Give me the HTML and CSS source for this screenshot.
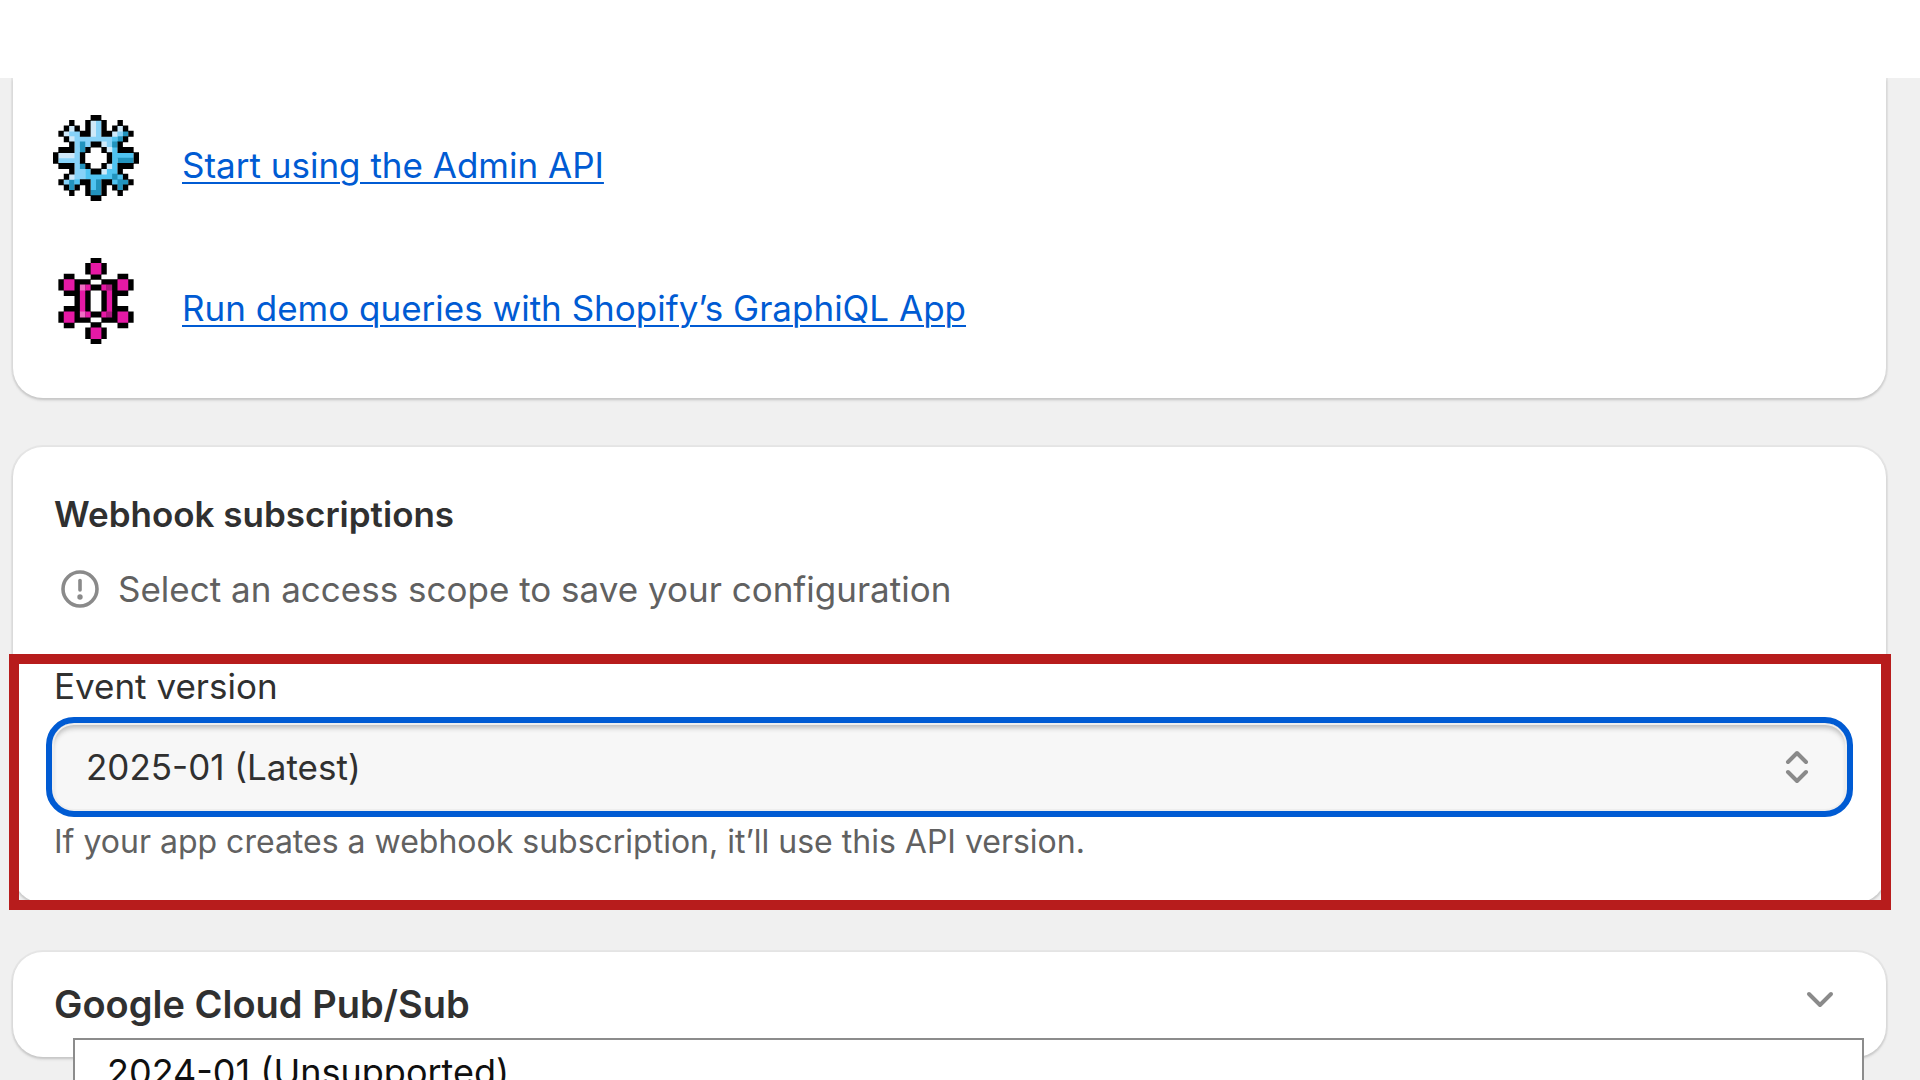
FILE: index.html
```html
<!DOCTYPE html>
<html lang="en">
<head>
<meta charset="utf-8">
<title>App configuration</title>
<meta name="viewport" content="width=device-width, initial-scale=1">
<link rel="stylesheet" href="styles.css">
</head>
<body>
<div class="page">
  <header class="topbar"></header>
  <main class="content">
    <section class="card card-links">
      <div class="resource">
        <svg class="resource-icon" viewBox="0 0 16 16" aria-hidden="true">
          <path class="px-sky" d="M7 1.5h2M7 2.5h2M3 2.5h1M12 2.5h1M2 3.5h3M7 3.5h2M11 3.5h2M3 4.5h9M4 5.5h3M9 5.5h2M4 6.5h1M10 6.5h1M1 7.5h4M1 8.5h4M4 9.5h1M10 9.5h1M4 10.5h2M9 10.5h1M3 11.5h3M2 12.5h2"/>
          <path class="px-blue" d="M11 3.5h1M11 4.5h1M11 5.5h1M11 6.5h1M11 7.5h4M11 8.5h1M10 9.5h2M5 9.5h1M6 10.5h1M10 10.5h2M6 11.5h7M4 12.5h1M7 12.5h1M11 12.5h2M7 13.5h1M7 14.5h1"/>
          <path class="px-deep" d="M13 3.5h1M12 4.5h1M5 5.5h1M11 5.5h1M5 6.5h1M12 8.5h3M5 9.5h1M11 11.5h1M3 12.5h1M8 12.5h1M12 12.5h2M3 13.5h1M8 13.5h1M12 13.5h1M7 14.5h2"/>
          <path class="px-pale" d="M7 1.5h1M7 2.5h1M7 3.5h1M3 2.5h1M2 3.5h1M3 4.5h1M12 2.5h1M11 3.5h1M9 5.5h1M10 6.5h1M1 7.5h3M10 9.5h1M9 10.5h1M3 11.5h1"/>
          <path class="px-black" d="M7 .5h2M3 1.5h1M6 1.5h1M9 1.5h1M12 1.5h1M2 2.5h1M4 2.5h1M6 2.5h1M9 2.5h1M11 2.5h1M13 2.5h1M1 3.5h1M5 3.5h2M9 3.5h2M14 3.5h1M2 4.5h1M13 4.5h1M3 5.5h1M7 5.5h2M12 5.5h1M1 6.5h3M6 6.5h1M9 6.5h1M12 6.5h3M0 7.5h1M5 7.5h1M10 7.5h1M15 7.5h1M0 8.5h1M5 8.5h1M10 8.5h1M15 8.5h1M1 9.5h3M6 9.5h1M9 9.5h1M12 9.5h3M3 10.5h1M7 10.5h2M12 10.5h1M2 11.5h1M13 11.5h1M1 12.5h1M5 12.5h2M9 12.5h2M14 12.5h1M2 13.5h1M4 13.5h1M6 13.5h1M9 13.5h1M11 13.5h1M13 13.5h1M3 14.5h1M6 14.5h1M9 14.5h1M12 14.5h1M7 15.5h2"/>
        </svg>
        <a class="resource-link" href="#admin-api">Start using the Admin API</a>
      </div>
      <div class="resource">
        <svg class="resource-icon" viewBox="0 0 16 16" aria-hidden="true">
          <path class="px-black" d="M7 .5h2M6 1.5h4M6 2.5h4M2 3.5h2M7 3.5h2M12 3.5h2M1 4.5h6M9 4.5h6M1 5.5h14M2 6.5h5M9 6.5h5M4 7.5h3M9 7.5h3M4 8.5h3M9 8.5h3M2 9.5h5M9 9.5h5M1 10.5h14M1 11.5h6M9 11.5h6M2 12.5h2M7 12.5h2M12 12.5h2M6 13.5h4M6 14.5h4M7 15.5h2"/>
          <path class="px-pink" d="M7 1.5h2M7 2.5h2M2 4.5h2M12 4.5h2M2 5.5h2M6 5.5h1M9 5.5h1M12 5.5h2M5 6.5h1M10 6.5h1M5 7.5h1M10 7.5h1M5 8.5h1M10 8.5h1M5 9.5h1M10 9.5h1M2 10.5h2M6 10.5h1M9 10.5h1M12 10.5h2M2 11.5h2M12 11.5h2M7 13.5h2M7 14.5h2"/>
          <path class="px-rose" d="M5 5.5h1M5 10.5h1"/>
          <path class="px-plum" d="M10 5.5h1M10 10.5h1"/>
        </svg>
        <a class="resource-link" href="#graphiql">Run demo queries with Shopify’s GraphiQL App</a>
      </div>
    </section>

    <section class="card card-webhooks">
      <h2 class="card-title">Webhook subscriptions</h2>
      <p class="notice">
        <svg class="notice-icon" viewBox="0 0 40 40" aria-hidden="true">
          <circle cx="20" cy="20" r="17" fill="none" stroke="currentColor" stroke-width="3.6"/>
          <path d="M20 11.500v9.500" fill="none" stroke="currentColor" stroke-width="3.600" stroke-linecap="round"/>
          <circle cx="20" cy="28" r="2.700" fill="currentColor"/>
        </svg>
        Select an access scope to save your configuration
      </p>
      <div class="field">
        <label class="field-label" for="event-version">Event version</label>
        <div class="select-box">
          <select class="select" id="event-version" aria-describedby="version-help">
            <option>2025-01 (Latest)</option>
          </select>
          <svg class="select-caret" viewBox="0 0 24 36" aria-hidden="true">
            <path d="M3 13l9-9 9 9M3 23l9 9 9-9"/>
          </svg>
          <ul class="menu" role="listbox" aria-label="Event version">
            <li class="menu-item" role="option">2024-01 (Unsupported)</li>
          </ul>
        </div>
        <p class="field-help" id="version-help">If your app creates a webhook subscription, it’ll use this API version.</p>
        <div class="highlight"></div>
      </div>
    </section>

    <section class="card">
      <button class="disclosure" type="button" aria-expanded="false">
        Google Cloud Pub/Sub
        <svg class="disclosure-icon" viewBox="0 0 30 20" aria-hidden="true">
          <path d="M4 4l11 11L26 4"/>
        </svg>
      </button>
    </section>
  </main>
</div>
</body>
</html>
```
FILE: styles.css
```css
* {
  box-sizing: border-box;
}

body {
  margin: 0;
  background: #f0f0f0;
  color: #303030;
  font-family: Inter, "Liberation Sans", sans-serif;
  font-size: 35px;
  line-height: 48px;
}

h2,
p,
ul {
  margin: 0;
  padding: 0;
}

.page {
  height: 100vh;
  overflow: hidden;
}

.topbar {
  position: relative;
  z-index: 1;
  height: 78px;
  background: #fff;
}

.content {
  display: flex;
  flex-direction: column;
  gap: 49px;
  padding: 0 34px 0 13px;
}

.card {
  border-radius: 30px;
  background: #fff;
  box-shadow: 0 2px 3px 0 #c4c4c4, 0 0 0 2px #e6e6e6;
}

.card-links {
  display: flex;
  flex-direction: column;
  gap: 57px;
  padding: 37px 40px 54px;
  border-radius: 0 0 30px 30px;
}

.resource {
  display: flex;
  align-items: center;
  gap: 43px;
}

.resource-icon {
  flex: none;
  width: 86px;
  height: 86px;
  fill: none;
  stroke-width: 1.1;
}

.px-black { stroke: #000; }
.px-sky { stroke: #87d2f8; }
.px-blue { stroke: #4fc3f1; }
.px-deep { stroke: #2293bd; }
.px-pale { stroke: #cfe9f9; }
.px-pink { stroke: #e619a5; }
.px-rose { stroke: #f06cc4; }
.px-plum { stroke: #a8187c; }

.resource-link {
  padding-top: 14px;
  color: #005bd3;
  text-decoration-thickness: 2px;
  text-underline-offset: 4px;
}

.card-webhooks {
  padding: 43px 41px 37px;
}

.card-title {
  font-size: 35px;
  font-weight: 600;
}

.notice {
  display: flex;
  align-items: center;
  gap: 18px;
  margin-top: 27px;
  padding-left: 6px;
  color: #616161;
}

.notice-icon {
  flex: none;
  width: 40px;
  height: 40px;
  color: #8a8a8a;
}

.field {
  position: relative;
  margin-top: 49px;
}

.field-label {
  display: block;
}

.select-box {
  position: relative;
  margin: 7px -8px 0;
}

.select {
  display: block;
  width: 100%;
  height: 100px;
  padding: 0 80px 0 34px;
  border: 6px solid #005bd3;
  border-radius: 28px;
  outline: none;
  appearance: none;
  background: #f7f7f7;
  box-shadow: inset 0 0 0 2px #eee, inset 0 5px 5px 0 #bdbdbd;
  color: #303030;
  font: inherit;
}

.select-caret {
  position: absolute;
  top: 32px;
  right: 44px;
  width: 24px;
  height: 36px;
  fill: none;
  stroke: #8a8a8a;
  stroke-width: 4;
  stroke-linecap: round;
  stroke-linejoin: round;
  pointer-events: none;
}

.menu {
  position: absolute;
  z-index: 3;
  top: 321px;
  right: -11px;
  left: 27px;
  padding: 8px 0;
  border: 2px solid #8c8c8c;
  background: #fff;
  color: #101010;
  font-size: 36px;
  list-style: none;
}

.menu-item {
  padding: 0 32px;
}

.field-help {
  margin-top: 1px;
  color: #616161;
  font-size: 32px;
}

.highlight {
  position: absolute;
  z-index: 2;
  inset: -8px -46px -44px -45px;
  border: 10px solid #b71c1c;
  pointer-events: none;
}

.disclosure {
  display: flex;
  align-items: center;
  justify-content: space-between;
  width: 100%;
  padding: 28px 51px 29px 41px;
  border: 0;
  background: none;
  color: #303030;
  font: inherit;
  font-size: 38px;
  font-weight: 600;
}

.disclosure-icon {
  width: 30px;
  height: 20px;
  margin-bottom: 8px;
  fill: none;
  stroke: #8a8a8a;
  stroke-width: 4;
  stroke-linecap: round;
  stroke-linejoin: round;
}
```
